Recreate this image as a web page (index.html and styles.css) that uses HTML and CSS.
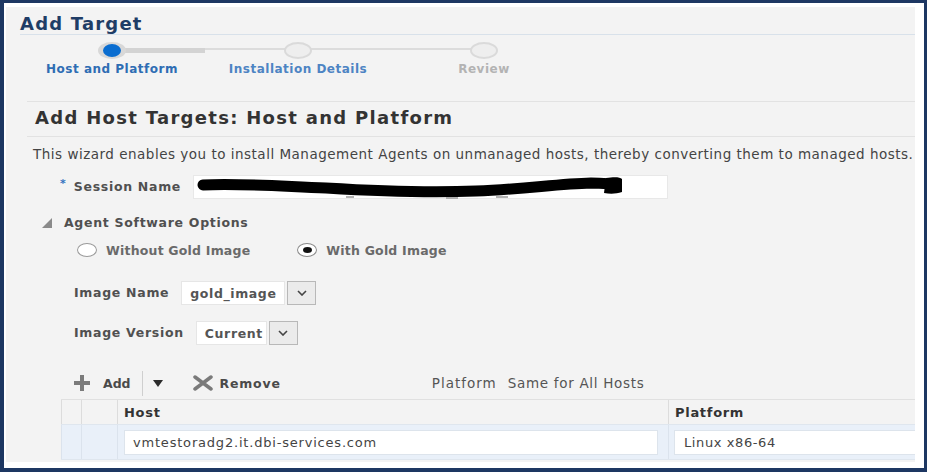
FILE: index.html
```html
<!DOCTYPE html>
<html lang="en">
<head>
<meta charset="utf-8">
<title>Add Target</title>
<link rel="stylesheet" href="styles.css">
</head>
<body>
<div class="frame">
  <div class="screen">
    <h1 class="page-title">Add Target</h1>

    <ol class="train">
      <li class="step step-current">
        <span class="marker"><span class="dot"></span></span>
        <span class="step-label">Host and Platform</span>
      </li>
      <li class="step step-next">
        <span class="marker"></span>
        <span class="step-label">Installation Details</span>
      </li>
      <li class="step step-last">
        <span class="marker"></span>
        <span class="step-label">Review</span>
      </li>
    </ol>

    <section class="panel">
      <h2 class="panel-title">Add Host Targets: Host and Platform</h2>
      <p class="intro">This wizard enables you to install Management Agents on unmanaged hosts, thereby converting them to managed hosts.</p>

      <div class="session">
        <span class="req">*</span>
        <span class="label">Session Name</span>
        <span class="text-input">
          <svg class="scribble" width="430" height="24" viewBox="0 0 430 24">
            <path d="M7 10 C 40 8, 80 11, 130 13 C 180 16, 230 18, 280 16 C 330 14, 360 9, 395 8 C 408 8, 414 9, 420 9" fill="none" stroke="#000" stroke-width="11" stroke-linecap="round"/>
            <path d="M410 3 C 418 2, 424 2, 426 4 L 426 17 C 420 19, 414 19, 408 18 Z" fill="#000"/>
            <path d="M150 22 L 158 22 M 250 23 L 262 23 M 300 22 L 312 22" stroke="#999" stroke-width="1.5"/>
          </svg>
        </span>
      </div>

      <div class="disclosure">
        <svg width="10" height="10" viewBox="0 0 10 10"><polygon points="0,10 10,10 10,0" fill="#8a8a8a"/></svg>
        <span class="label">Agent Software Options</span>
      </div>

      <div class="radios">
        <span class="radio"></span>
        <span class="radio-label">Without Gold Image</span>
        <span class="radio radio-on"><span class="radio-dot"></span></span>
        <span class="radio-label">With Gold Image</span>
      </div>

      <div class="field">
        <span class="label field-label">Image Name</span>
        <span class="select">
          <span class="select-value select-name">gold_image</span>
          <span class="select-btn"><svg width="10" height="6" viewBox="0 0 10 6"><polyline points="1,1 5,5 9,1" fill="none" stroke="#444" stroke-width="1.6"/></svg></span>
        </span>
      </div>

      <div class="field field-version">
        <span class="label field-label">Image Version</span>
        <span class="select">
          <span class="select-value select-version">Current</span>
          <span class="select-btn"><svg width="10" height="6" viewBox="0 0 10 6"><polyline points="1,1 5,5 9,1" fill="none" stroke="#444" stroke-width="1.6"/></svg></span>
        </span>
      </div>

      <div class="toolbar">
        <svg class="icon-plus" width="18" height="18" viewBox="0 0 18 18"><rect x="7" y="1" width="4" height="16" fill="#7b7b7b"/><rect x="1" y="7" width="16" height="4" fill="#7b7b7b"/></svg>
        <span class="tb-btn tb-add">Add</span>
        <span class="tb-divider"></span>
        <svg class="icon-menu" width="10" height="7" viewBox="0 0 10 7"><polygon points="0,0 10,0 5,7" fill="#2b2b2b"/></svg>
        <svg class="icon-x" width="20" height="16" viewBox="0 0 20 16"><path d="M2 2 L18 14 M18 2 L2 14" stroke="#7a7a7a" stroke-width="3.5" stroke-linecap="round"/></svg>
        <span class="tb-btn tb-remove">Remove</span>
        <span class="tb-text tb-platform">Platform</span>
        <span class="tb-text tb-same">Same for All Hosts</span>
      </div>

      <table class="hosts">
        <colgroup>
          <col class="c-sel">
          <col class="c-num">
          <col class="c-host">
          <col class="c-plat">
        </colgroup>
        <thead>
          <tr>
            <th></th>
            <th></th>
            <th>Host</th>
            <th>Platform</th>
          </tr>
        </thead>
        <tbody>
          <tr>
            <td></td>
            <td></td>
            <td class="cell-host"><span class="cell-input">vmtestoradg2.it.dbi-services.com</span></td>
            <td class="cell-plat"><span class="cell-input">Linux x86-64</span></td>
          </tr>
        </tbody>
      </table>
    </section>
  </div>
</div>
</body>
</html>
```

FILE: styles.css
```css
html, body {
  margin: 0;
  padding: 0;
}

body {
  background: #1d3762;
  font-family: "DejaVu Sans", "Liberation Sans", sans-serif;
  width: 927px;
  height: 472px;
  overflow: hidden;
}

.frame {
  margin: 3px 3px 4px 4px;
  height: 465px;
  background: #ffffff;
  padding: 4px 9px 6px 2px;
  box-sizing: border-box;
}

.screen {
  height: 100%;
  background: #f3f3f3;
  overflow: hidden;
}

/* page header */
.page-title {
  margin: 6px 0 0 14px;
  font-size: 18px;
  line-height: 21px;
  font-weight: bold;
  letter-spacing: 1.2px;
  color: #1f3d66;
  border-bottom: 1px solid #d8e1ea;
}

/* train */
.train {
  display: flex;
  margin: 7px 0 0 13px;
  padding: 0;
  list-style: none;
}

.step {
  width: 186px;
  position: relative;
  display: flex;
  flex-direction: column;
  align-items: center;
}

.step::before,
.step::after {
  content: "";
  position: absolute;
  top: 6px;
  height: 2px;
  background: #dcdcdc;
}

.step::before {
  left: 0;
  right: 50%;
}

.step::after {
  left: 50%;
  right: 0;
}

.step-current::before {
  display: none;
}

.step-current::after {
  height: 5px;
  background: #d3d3d3;
}

.step-last::after {
  display: none;
}

.marker {
  position: relative;
  z-index: 1;
  width: 28px;
  height: 17px;
  border-radius: 50%;
  box-sizing: border-box;
  display: flex;
  align-items: center;
  justify-content: center;
  background: #eeeeee;
  border: 2px solid #dadada;
}

.step-current .marker {
  background: #d8d8d8;
  border: none;
}

.dot {
  width: 18px;
  height: 13px;
  border-radius: 50%;
  background: #0a6dd0;
}

.step-label {
  margin-top: 3px;
  font-size: 12px;
  line-height: 15px;
  font-weight: bold;
  letter-spacing: 0.5px;
  white-space: nowrap;
}

.step-current .step-label {
  color: #2e6db3;
}

.step-next .step-label {
  color: #4d84c3;
}

.step-last .step-label {
  color: #b3b3b3;
}

/* panel */
.panel {
  margin: 24px 0 0 21px;
  border-top: 1px solid #e2e2e2;
}

.panel-title {
  margin: 0;
  padding: 5px 0 7px 8px;
  font-size: 18px;
  line-height: 22px;
  font-weight: bold;
  letter-spacing: 1.3px;
  color: #333333;
  border-bottom: 1px solid #e2e2e2;
}

.intro {
  margin: 9px 0 0 6px;
  font-size: 13.5px;
  line-height: 17px;
  letter-spacing: 0.5px;
  color: #444444;
  white-space: nowrap;
}

.label {
  font-size: 12.5px;
  line-height: 16px;
  font-weight: bold;
  letter-spacing: 0.7px;
  color: #505050;
  white-space: nowrap;
}

.session {
  display: flex;
  align-items: center;
  height: 24px;
  margin: 12px 0 0 33px;
}

.req {
  color: #3573c0;
  font-size: 11px;
  font-weight: bold;
  align-self: flex-start;
  margin: 2px 8px 0 0;
}

.text-input {
  display: flex;
  align-items: center;
  width: 475px;
  height: 24px;
  margin-left: 12px;
  background: #ffffff;
  border: 1px solid #e8e8e8;
  box-sizing: border-box;
}

.scribble {
  margin-left: 2px;
}

.disclosure {
  display: flex;
  align-items: center;
  gap: 12px;
  margin: 16px 0 0 15px;
}

.radios {
  display: flex;
  align-items: center;
  height: 14px;
  margin: 12px 0 0 50px;
}

.radio {
  width: 20px;
  height: 14px;
  border-radius: 50%;
  border: 1px solid #9a9a9a;
  background: #ffffff;
  box-sizing: border-box;
  margin-right: 9px;
  display: flex;
  align-items: center;
  justify-content: center;
}

.radio-on {
  border-color: #8a8a8a;
}

.radio-dot {
  width: 9px;
  height: 6px;
  border-radius: 50%;
  background: #111111;
}

.radio-label {
  font-size: 12.5px;
  font-weight: bold;
  letter-spacing: 0.2px;
  color: #6a6a6a;
  white-space: nowrap;
  margin-right: 47px;
}

.field {
  display: flex;
  align-items: center;
  height: 24px;
  margin: 24px 0 0 47px;
}

.field-version {
  margin-top: 16px;
}

.field-label {
  margin-right: 12px;
}

.select {
  display: flex;
  gap: 2px;
}

.select-value {
  display: flex;
  align-items: center;
  height: 24px;
  padding: 0 8px;
  box-sizing: border-box;
  background: #ffffff;
  border: 1px solid #e6e6e6;
  font-size: 12.5px;
  font-weight: bold;
  letter-spacing: 0.6px;
  color: #555555;
  white-space: nowrap;
}

.select-name {
  width: 104px;
}

.select-version {
  width: 71px;
}

.select-btn {
  display: flex;
  align-items: center;
  justify-content: center;
  width: 29px;
  height: 24px;
  box-sizing: border-box;
  background: #ebebeb;
  border: 1px solid #b8b8b8;
}

/* toolbar */
.toolbar {
  display: flex;
  align-items: center;
  height: 26px;
  margin: 25px 0 0 46px;
}

.tb-btn {
  font-size: 12.5px;
  font-weight: bold;
  color: #4a4a4a;
  white-space: nowrap;
}

.tb-add {
  margin-left: 12px;
}

.tb-divider {
  width: 1px;
  height: 25px;
  background: #cfcfcf;
  margin-left: 11px;
}

.icon-menu {
  margin-left: 10px;
}

.icon-x {
  margin-left: 30px;
}

.tb-remove {
  margin-left: 7px;
  letter-spacing: 0.8px;
}

.tb-text {
  font-size: 13.5px;
  letter-spacing: 0.7px;
  color: #555555;
  white-space: nowrap;
}

.tb-platform {
  margin-left: 151px;
  letter-spacing: 1px;
}

.tb-same {
  margin-left: 11px;
}

/* table */
.hosts {
  margin: 3px 0 0 34px;
  width: 880px;
  table-layout: fixed;
  border-collapse: collapse;
}

.c-sel { width: 20px; }
.c-num { width: 36px; }
.c-host { width: 551px; }
.c-plat { width: 273px; }

.hosts th {
  height: 24px;
  padding: 0 6px;
  text-align: left;
  font-size: 13px;
  font-weight: bold;
  letter-spacing: 0.7px;
  color: #333333;
  background: #f3f3f3;
  border-top: 1px solid #e0e0e0;
  border-left: 1px solid #dcdcdc;
  border-bottom: 1px solid #dfe6ee;
}

.hosts td {
  height: 34px;
  padding: 0;
  background: #e9f0f9;
  border-left: 1px solid #dbe3ed;
  border-bottom: 1px solid #dfe6ee;
}

.hosts td.cell-host {
  padding: 0 10px 0 6px;
}

.hosts td.cell-plat {
  padding: 0 0 0 5px;
}

.cell-input {
  display: flex;
  align-items: center;
  height: 25px;
  box-sizing: border-box;
  background: #ffffff;
  border: 1px solid #dde4ec;
  padding-left: 8px;
  font-size: 13px;
  letter-spacing: 0.8px;
  color: #444444;
  white-space: nowrap;
}

.cell-plat .cell-input {
  padding-left: 9px;
  letter-spacing: 0.6px;
}
```
